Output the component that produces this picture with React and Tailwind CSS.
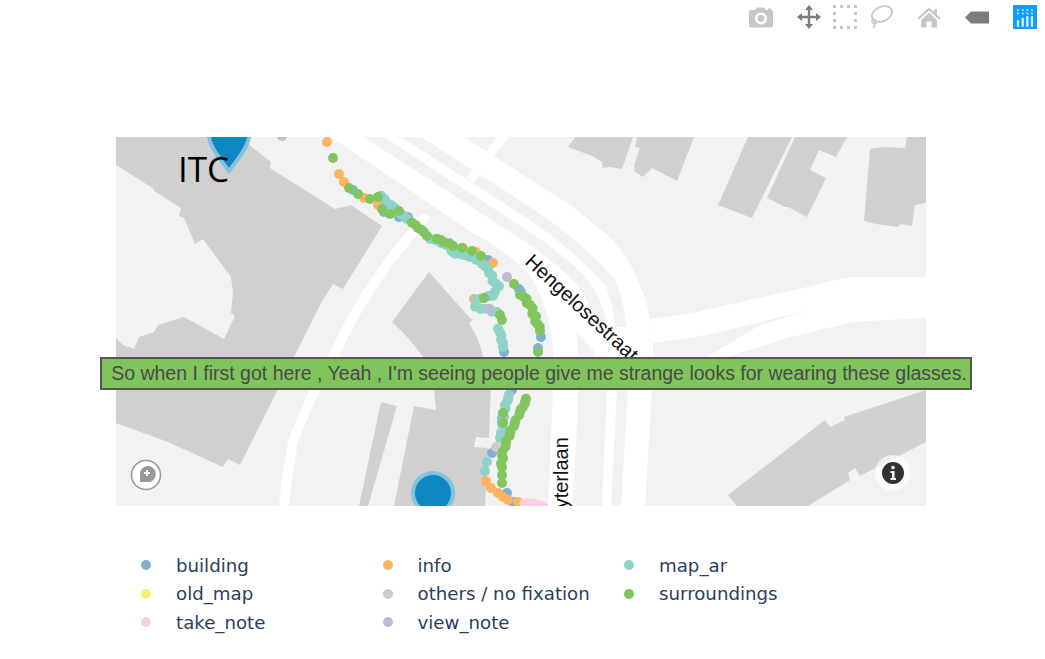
import React from 'react';

const colors = {
  building: '#80b1d3',
  info: '#fdb462',
  map_ar: '#8dd3c7',
  old_map: '#ffed6f',
  others: '#cccccc',
  surroundings: '#82c55f',
  take_note: '#fccde5',
  view_note: '#bebada',
};

const legend = [
  ['building', 'building'],
  ['info', 'info'],
  ['map_ar', 'map_ar'],
  ['old_map', 'old_map'],
  ['others', 'others / no fixation'],
  ['surroundings', 'surroundings'],
  ['take_note', 'take_note'],
  ['view_note', 'view_note'],
];

const buildings = [
  '116,137 240,137 253,148 271,162 270,168 335,209 351,205 382,226 343,289 333,284 321,303 294,357 278,389 240,465 228,459 223,467 168,442 116,423',
  '568,147 592,156 602,162 603,168 610,167 622,169 633,137 575,137',
  '637,137 635,147 640,148 634,165 635,172 643,177 652,168 677,181 694,137',
  '748,137 792,137 752,218 718,205',
  '795,137 847,137 836,157 819,150 810,170 826,178 807,217 788,207 785,207 767,198',
  '870,149 883,147 905,148 907,137 926,137 926,203 915,205 912,226 900,224 898,227 876,224 864,221',
  '728,495 825,420 830,427 845,420 844,417 926,390 926,442 860,476 855,468 848,473 850,480 808,506 737,506',
  '381,402 397,406 368,506 359,506',
];

// fills a walked stretch with dots, with a small wobble so it doesn't read as a line
function trace(points, step = 4) {
  const dots = [];
  for (let i = 0; i < points.length - 1; i++) {
    const [x1, y1] = points[i];
    const [x2, y2] = points[i + 1];
    const n = Math.max(1, Math.round(Math.hypot(x2 - x1, y2 - y1) / step));
    for (let j = 0; j < n; j++) {
      const wobble = ((i + j * 7) % 3) - 1;
      dots.push([x1 + ((x2 - x1) * j) / n + wobble, y1 + ((y2 - y1) * j) / n - wobble * 0.7]);
    }
  }
  dots.push(points[points.length - 1]);
  return dots;
}

const mapAr = [
  ...trace([[382, 195], [387, 203], [394, 209], [401, 213], [407, 219]]),
  ...trace([[431, 238], [441, 243], [449, 248], [456, 253], [464, 255], [474, 257], [483, 263], [489, 273], [498, 287], [494, 295], [483, 298], [475, 301], [476, 306], [481, 309], [489, 310], [497, 312]]),
  ...trace([[499, 328], [501, 340], [503, 347]]),
  ...trace([[510, 394], [505, 405], [503, 418], [502, 432], [500, 438]]),
  [487, 462],
  [485, 471],
];
const building = [
  [353, 190], [384, 212], [399, 217], [408, 217], [488, 260], [519, 289], [521, 292], [504, 352], [541, 337], [538, 348],
  [512, 390], [523, 407], [502, 418], [492, 453], [507, 493], [513, 502],
];
const info = [
  [327, 142], [339, 174], [344, 182], [364, 198], [378, 205], [463, 248], [476, 252], [493, 263], [474, 299],
  [486, 481], [491, 488], [498, 493], [503, 497], [508, 500], [518, 502],
];
const surroundings = [
  [333, 158], [349, 188], [358, 194], [370, 199], [378, 197], [382, 209], [390, 214], [399, 211],
  ...trace([[413, 222], [418, 228], [423, 233], [427, 236]]),
  ...trace([[438, 238], [444, 242], [453, 246]]),
  [462, 248], [472, 251], [481, 256], [484, 298],
  [500, 315], [502, 320],
  [514, 284],
  ...trace([[521, 294], [530, 305], [535, 317], [540, 331]]),
  [538, 352],
  ...trace([[527, 398], [520, 412], [513, 427], [507, 440], [502, 455], [502, 467]]),
  [502, 475], [502, 483], [503, 413], [503, 423],
];

function Dots({ points, color }) {
  return points.map(([x, y], i) => <circle key={i} cx={x} cy={y} r="5" fill={color} />);
}

function MapDrawing() {
  return (
    <svg width="810" height="369" viewBox="116 137 810 369" className="block">
      <rect x="116" y="137" width="810" height="369" fill="#f2f2f2" />

      {/* roads */}
      <path d="M331,137 L473,233 Q505,250 530,275 Q548,305 553,345 L553,390 L548,506 L645,506 L652,390 L650,319 Q640,270 613,240 Q590,220 570,205 L520,173 L464,137 Z" fill="#fff" />
      <path d="M650,319 L693,313 L820,284 Q840,278 853,277 L926,277 L926,318 L853,322 L787,338 L727,357 L690,389 L652,390 Z" fill="#fff" />
      <polygon points="653,343 707,335 810,310 760,325 707,357 690,375 653,389" fill="#f2f2f2" />
      <polygon points="577,333 595,352 593,390 607,390 602,506 572,506 578,412 578,357" fill="#f2f2f2" />
      <polygon points="617,390 628,390 621,506 611,506" fill="#f2f2f2" />
      <path d="M360,128 L374,137 L520,232 Q553,253 580,279 Q597,300 603,330" fill="none" stroke="#f2f2f2" strokeWidth="11" />
      <path d="M397,128 L411,137 L520,207 Q570,238 610,282 Q618,300 621,327" fill="none" stroke="#f2f2f2" strokeWidth="11" />
      <path d="M510,128 L470,180" fill="none" stroke="#fff" strokeWidth="9" />
      <path d="M424,219 Q365,285 333,357 Q310,395 293,442 Q287,475 284,506" fill="none" stroke="#fff" strokeWidth="10" strokeLinecap="round" />

      {/* buildings */}
      {buildings.map((points) => (
        <polygon key={points} points={points} fill="#d1d0ce" />
      ))}
      <polygon points="116,165 154,189 154,191 181,208 179,216 184,218 195,244 203,239 231,277 233,293 231,313 235,316 224,339 184,317 158,325 154,332 139,337 134,349 123,345 116,338" fill="#f2f2f2" />
      <path d="M429,272 L469,317 L473,320 L469,323 Q480,340 483,357 Q491,375 491,389 L489,438 L476,437 L474,447 L488,448 L485,506 L394,506 L414,406 L436,410 L434,389 Q430,370 423,357 Q410,338 392,322 Z" fill="#d1d0ce" />

      {/* fixations */}
      <Dots points={building} color={colors.building} />
      <Dots points={info} color={colors.info} />
      <Dots points={mapAr} color={colors.map_ar} />
      <Dots points={[[496, 447]]} color={colors.others} />
      <Dots points={[[282, 136], [507, 277], [489, 309]]} color={colors.view_note} />
      <Dots points={surroundings} color={colors.surroundings} />
      <path d="M524,503 Q535,502 544,507" fill="none" stroke={colors.take_note} strokeWidth="9" strokeLinecap="round" />

      {/* pins */}
      <path d="M207,130 V137 C208,148 222,165 229,174 C236,165 250,148 251,137 V130 Z" fill="#84c1e0" />
      <path d="M211,130 V137 C212,146 224,161 229,168 C234,161 246,146 247,137 V130 Z" fill="#0f87c0" />
      <circle cx="433" cy="493" r="22" fill="#84c1e0" />
      <circle cx="433" cy="493" r="18" fill="#0f87c0" />

      {/* map labels */}
      <text x="178" y="182" fontSize="35" fill="#000" fontFamily="'Open Sans', sans-serif">ITC</text>
      <text x="0" y="0" fontSize="20" fill="#111" fontFamily="'Liberation Sans', sans-serif" transform="translate(524,263) rotate(43)">Hengelosestraat</text>
      <text x="0" y="0" fontSize="20" fill="#111" fontFamily="'Liberation Sans', sans-serif" transform="translate(568,565) rotate(-90)">De Ruyterlaan</text>

      {/* map logo */}
      <circle cx="146" cy="475" r="14.5" fill="#fff" stroke="#999" strokeWidth="1.6" />
      <path d="M140,482 L140,475 A8,8 0 1 1 147,482 Z" fill="#999" />
      <path d="M147,470 V476 M144,473 H150" stroke="#fff" strokeWidth="1.8" />

      {/* info button */}
      <circle cx="893" cy="473" r="18" fill="#fff" fillOpacity="0.65" />
      <circle cx="893" cy="473" r="11" fill="#333" />
      <circle cx="893" cy="467.5" r="1.8" fill="#fff" />
      <path d="M890.5,471 H894.5 V478 H896 V480 H890.5 V478 H892 V473 H890.5 Z" fill="#fff" />
    </svg>
  );
}

function CameraIcon() {
  return (
    <svg width="24" height="24" viewBox="0 0 24 24">
      <path fillRule="evenodd" fill="#c7c7c7" d="M2,5 H6 L8,2.5 H15 L17,5 H19 V3.5 H22 V5 Q24,5 24,7 V20 Q24,22.5 22,22.5 H2 Q0,22.5 0,20 V7 Q0,5 2,5 Z M12,7.5 A6,6 0 1 0 12,19.5 A6,6 0 1 0 12,7.5 Z" />
      <circle cx="12" cy="13.5" r="3.4" fill="#c7c7c7" />
    </svg>
  );
}

function PanIcon() {
  return (
    <svg width="24" height="24" viewBox="0 0 24 24">
      <path d="M12,3 V21 M3,12 H21" stroke="#7c7c7c" strokeWidth="2.4" />
      <path d="M12,0 L16,5 H8 Z M12,24 L16,19 H8 Z M0,12 L5,8 V16 Z M24,12 L19,8 V16 Z" fill="#7c7c7c" />
    </svg>
  );
}

function SelectIcon() {
  return (
    <svg width="24" height="24" viewBox="0 0 24 24">
      <g fill="#c7c7c7">
        {[0, 7, 14, 21].map((p) => (
          <React.Fragment key={p}>
            <rect x={p} y="0" width="3" height="3" />
            <rect x={p} y="21" width="3" height="3" />
            <rect x="0" y={p} width="3" height="3" />
            <rect x="21" y={p} width="3" height="3" />
          </React.Fragment>
        ))}
      </g>
    </svg>
  );
}

function LassoIcon() {
  return (
    <svg width="24" height="24" viewBox="0 0 24 24">
      <ellipse cx="13" cy="9" rx="10.5" ry="7.2" transform="rotate(-24 13 9)" fill="none" stroke="#c7c7c7" strokeWidth="1.8" />
      <path d="M3,13 Q7,15 6,18 Q5,21 4.5,23.5 M2.5,15 Q4,20 8,18" fill="none" stroke="#c7c7c7" strokeWidth="1.6" />
    </svg>
  );
}

function HomeIcon() {
  return (
    <svg width="24" height="24" viewBox="0 0 24 24">
      <path fill="#c7c7c7" d="M12,2.5 L17,7 V4 H20 V9.5 L23.5,13 L22,14.5 L12,5.5 L2,14.5 L0.5,13 Z M4,15 L12,7.5 L20,15 V22.5 H14.5 V16.5 H9.5 V22.5 H4 Z" />
    </svg>
  );
}

function BackIcon() {
  return (
    <svg width="24" height="24" viewBox="0 0 24 24">
      <path fill="#7c7c7c" d="M0,12.5 L6,6.5 H24 V18.5 H6 Z" />
    </svg>
  );
}

function PlotlyIcon() {
  return (
    <svg width="24" height="24" viewBox="0 0 24 24" className="bg-[#119dff]">
      <path d="M5,16 V21 M9.7,13.5 V21 M14.3,12 V21 M19,12 V21" stroke="#fff" strokeWidth="2.2" strokeLinecap="round" opacity="0.9" />
      <g fill="#fff" opacity="0.75">
        <circle cx="5" cy="5" r="1.1" />
        <circle cx="9.7" cy="5" r="1.1" />
        <circle cx="14.3" cy="5" r="1.1" />
        <circle cx="19" cy="5" r="1.1" />
        <circle cx="5" cy="8.5" r="1.1" />
        <circle cx="9.7" cy="8.5" r="1.1" />
        <circle cx="14.3" cy="8.5" r="1.1" />
        <circle cx="19" cy="8.5" r="1.1" />
      </g>
    </svg>
  );
}

function App() {
  return (
    <div className="w-[1045px] h-[659px] bg-white overflow-hidden">
      <div className="flex justify-end gap-6 pt-[5px] pr-2 h-[34px]">
        <CameraIcon />
        <div className="flex gap-3">
          <PanIcon />
          <SelectIcon />
          <LassoIcon />
        </div>
        <HomeIcon />
        <BackIcon />
        <PlotlyIcon />
      </div>

      <div className="relative w-[810px] h-[369px] ml-[116px] mt-[103px]">
        <MapDrawing />
        <div className="absolute left-[-16px] top-[220px] w-[872px] h-[33px] flex items-center justify-center pl-[6px] whitespace-nowrap bg-[#80c45c] border-2 border-[#555] text-[#4a4a4a] text-[19.5px] font-['Liberation_Sans',sans-serif]">
          So when I first got here , Yeah , I'm seeing people give me strange looks for wearing these glasses.
        </div>
      </div>

      <div className="grid grid-cols-[241.5px_241.5px_241.5px] ml-[141px] mt-[45px] font-['DejaVu_Sans',sans-serif] text-[18.2px] text-[#2a3f5f]">
        {legend.map(([key, name]) => (
          <div key={key} className="flex items-center h-[28.5px]">
            <svg width="10" height="10" viewBox="0 0 10 10" className="shrink-0 mr-[25px]">
              <circle cx="5" cy="5" r="5" fill={colors[key]} />
            </svg>
            <span>{name}</span>
          </div>
        ))}
      </div>
    </div>
  );
}

export default App;
